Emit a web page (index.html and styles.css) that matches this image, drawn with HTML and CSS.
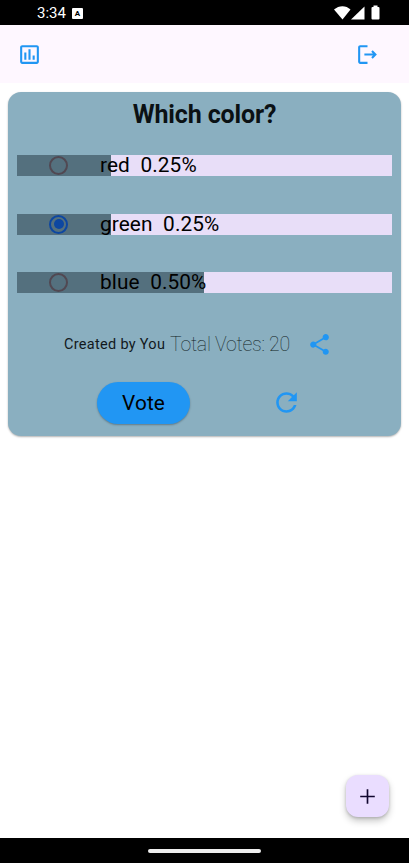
FILE: index.html
```html
<!DOCTYPE html>
<html lang="en">
<head>
<meta charset="utf-8">
<title>Polls</title>
<link rel="stylesheet" href="styles.css">
</head>
<body>
<div class="screen">
  <div class="status">
    <span class="clock">3:34</span>
    <span class="badge">A</span>
    <svg class="signals" width="47" height="16" viewBox="0 0 47 16">
      <path d="M0 4.500C5 0 12 0 16.500 4.500L8.500 14.500Z"/>
      <path d="M17 14.500L30.500 1.500V14.500Z"/>
      <path d="M39.500 .5h4v1.500h1q1 0 1 1V13.500q0 1-1 1h-6q-1 0-1-1V3q0-1 1-1h1Z"/>
    </svg>
  </div>
  <header class="appbar">
    <svg class="icon" viewBox="0 0 24 24"><path d="M9 17H7v-7h2v7zm4 0h-2V7h2v10zm4 0h-2v-4h2v4zm2 2H5V5h14v14zm0-16H5c-1.100 0-2 .9-2 2v14c0 1.100.9 2 2 2h14c1.100 0 2-.9 2-2V5c0-1.100-.9-2-2-2z"/></svg>
    <svg class="icon" viewBox="0 0 24 24"><path d="M17 8l-1.410 1.410L17.170 11H9v2h8.170l-1.580 1.580L17 16l4-4-4-4zM5 5h7V3H5c-1.100 0-2 .9-2 2v14c0 1.100.9 2 2 2h7v-2H5V5z"/></svg>
  </header>
  <main class="card">
    <h1 class="title">Which color?</h1>
    <div class="options">
      <div class="option quarter"><i class="radio"></i><span class="label">red&nbsp; 0.25%</span></div>
      <div class="option quarter"><i class="radio checked"></i><span class="label">green&nbsp; 0.25%</span></div>
      <div class="option half"><i class="radio"></i><span class="label">blue&nbsp; 0.50%</span></div>
    </div>
    <div class="meta">
      <span class="author">Created by You</span>
      <span class="total">Total Votes: 20</span>
      <svg class="icon" viewBox="0 0 24 24"><path d="M18 16.080c-.76 0-1.440.3-1.960.77L8.910 12.700c.05-.23.09-.46.09-.7s-.04-.47-.09-.7l7.050-4.110c.54.5 1.250.81 2.040.81 1.660 0 3-1.340 3-3s-1.340-3-3-3-3 1.340-3 3c0 .24.04.47.09.7L8.040 9.810C7.500 9.310 6.790 9 6 9c-1.660 0-3 1.340-3 3s1.340 3 3 3c.79 0 1.500-.31 2.040-.81l7.120 4.160c-.05.21-.08.43-.08.65 0 1.610 1.310 2.920 2.920 2.920s2.920-1.310 2.920-2.920-1.310-2.920-2.920-2.920z"/></svg>
    </div>
    <div class="actions">
      <button class="vote">Vote</button>
      <svg class="refresh" viewBox="0 0 24 24"><path d="M17.650 6.350C16.200 4.900 14.210 4 12 4c-4.420 0-7.990 3.580-7.990 8s3.570 8 7.990 8c3.730 0 6.840-2.550 7.730-6h-2.080c-.82 2.330-3.040 4-5.650 4-3.310 0-6-2.690-6-6s2.690-6 6-6c1.660 0 3.140.69 4.220 1.780L13 11h7V4l-2.350 2.350z"/></svg>
    </div>
  </main>
  <div class="bottom">
    <button class="fab"><svg class="plus" viewBox="0 0 24 24"><path d="M19 12.800h-6.200v6.200h-1.600v-6.200H5v-1.600h6.200V5h1.600v6.200H19z"/></svg></button>
  </div>
  <footer class="nav"><i class="handle"></i></footer>
</div>
</body>
</html>
```
FILE: styles.css
```css
* { box-sizing: border-box; }
body { margin: 0; background: #fff; font-family: Roboto, sans-serif; color: #000; }
button { border: 0; padding: 0; font-family: inherit; color: #000; }
.screen { width: 409px; height: 863px; display: flex; flex-direction: column; overflow: hidden; }
.status { height: 25px; flex: none; background: #000; color: #fff; display: flex; align-items: center; padding: 1px 28px 0 37px; }
.clock { font-size: 15px; line-height: 24px; width: 29px; white-space: nowrap; }
.badge { width: 11px; height: 11px; margin: 1px 0 0 6px; border-radius: 1px; background: #fff; color: #000; font-size: 8px; font-weight: 700; line-height: 11px; text-align: center; }
.signals { margin: 0 0 0 auto; fill: #fff; }
.appbar { height: 58px; flex: none; background: #fef7ff; display: flex; align-items: center; justify-content: space-between; padding: 0 29px 0 16.500px; }
.icon { width: 25px; height: 25px; fill: #2196f3; flex: none; }
.card { height: 344px; flex: none; margin: 9px 8px 0; border-radius: 13px; background: #8aafc0; box-shadow: 0 1px 2px rgba(0,0,0,.3); padding: 8px 9px 0; }
.title { margin: 0; height: 30px; font-size: 25px; line-height: 30px; font-weight: 700; text-align: center; color: #0b1114; letter-spacing: -.15px; }
.options { display: grid; gap: 37.500px; padding-top: 25px; }
.option { height: 21px; display: flex; align-items: center; background: #e8def8; }
.quarter { background: linear-gradient(90deg, #54707e 25%, #e8def8 25%); }
.half { background: linear-gradient(90deg, #54707e 50%, #e8def8 50%); }
.radio { width: 19px; height: 19px; flex: none; margin-left: 32px; border: 2px solid #514852; border-radius: 50%; display: grid; place-items: center; }
.checked { border-color: #0d47a1; }
.checked::after { content: ""; width: 10px; height: 10px; border-radius: 50%; background: #0d47a1; }
.label { margin-left: 32px; font-size: 20.800px; line-height: 21px; letter-spacing: .1px; white-space: pre; }
.meta { height: 50px; margin-top: 26px; padding-left: 47px; display: flex; align-items: center; white-space: nowrap; }
.author { width: 106px; font-size: 14.500px; letter-spacing: .3px; color: #12191d; }
.total { width: 137px; font-size: 19.500px; font-weight: 100; letter-spacing: -.25px; color: #101d23; }
.actions { height: 42px; margin-top: 13px; padding-left: 80px; display: flex; align-items: center; }
.vote { width: 93px; height: 42px; border-radius: 21px; background: #2196f3; font-size: 20.800px; font-weight: 450; letter-spacing: .1px; box-shadow: 0 1px 2px rgba(0,0,0,.3); }
.refresh { width: 31px; height: 31px; margin-left: 81px; margin-bottom: 1px; fill: #2196f3; }
.bottom { flex: 1; display: flex; align-items: flex-end; justify-content: flex-end; padding: 0 20px 21px 0; }
.fab { width: 43px; height: 42px; border-radius: 12px; background: #eaddff; box-shadow: 0 4px 7px rgba(0,0,0,.22), 0 1px 3px rgba(0,0,0,.18); display: grid; place-items: center; }
.plus { width: 25px; height: 25px; fill: #10062e; }
.nav { height: 25px; flex: none; background: #000; display: grid; place-items: center; }
.handle { width: 113px; height: 4px; border-radius: 2px; background: #eee; }
```
